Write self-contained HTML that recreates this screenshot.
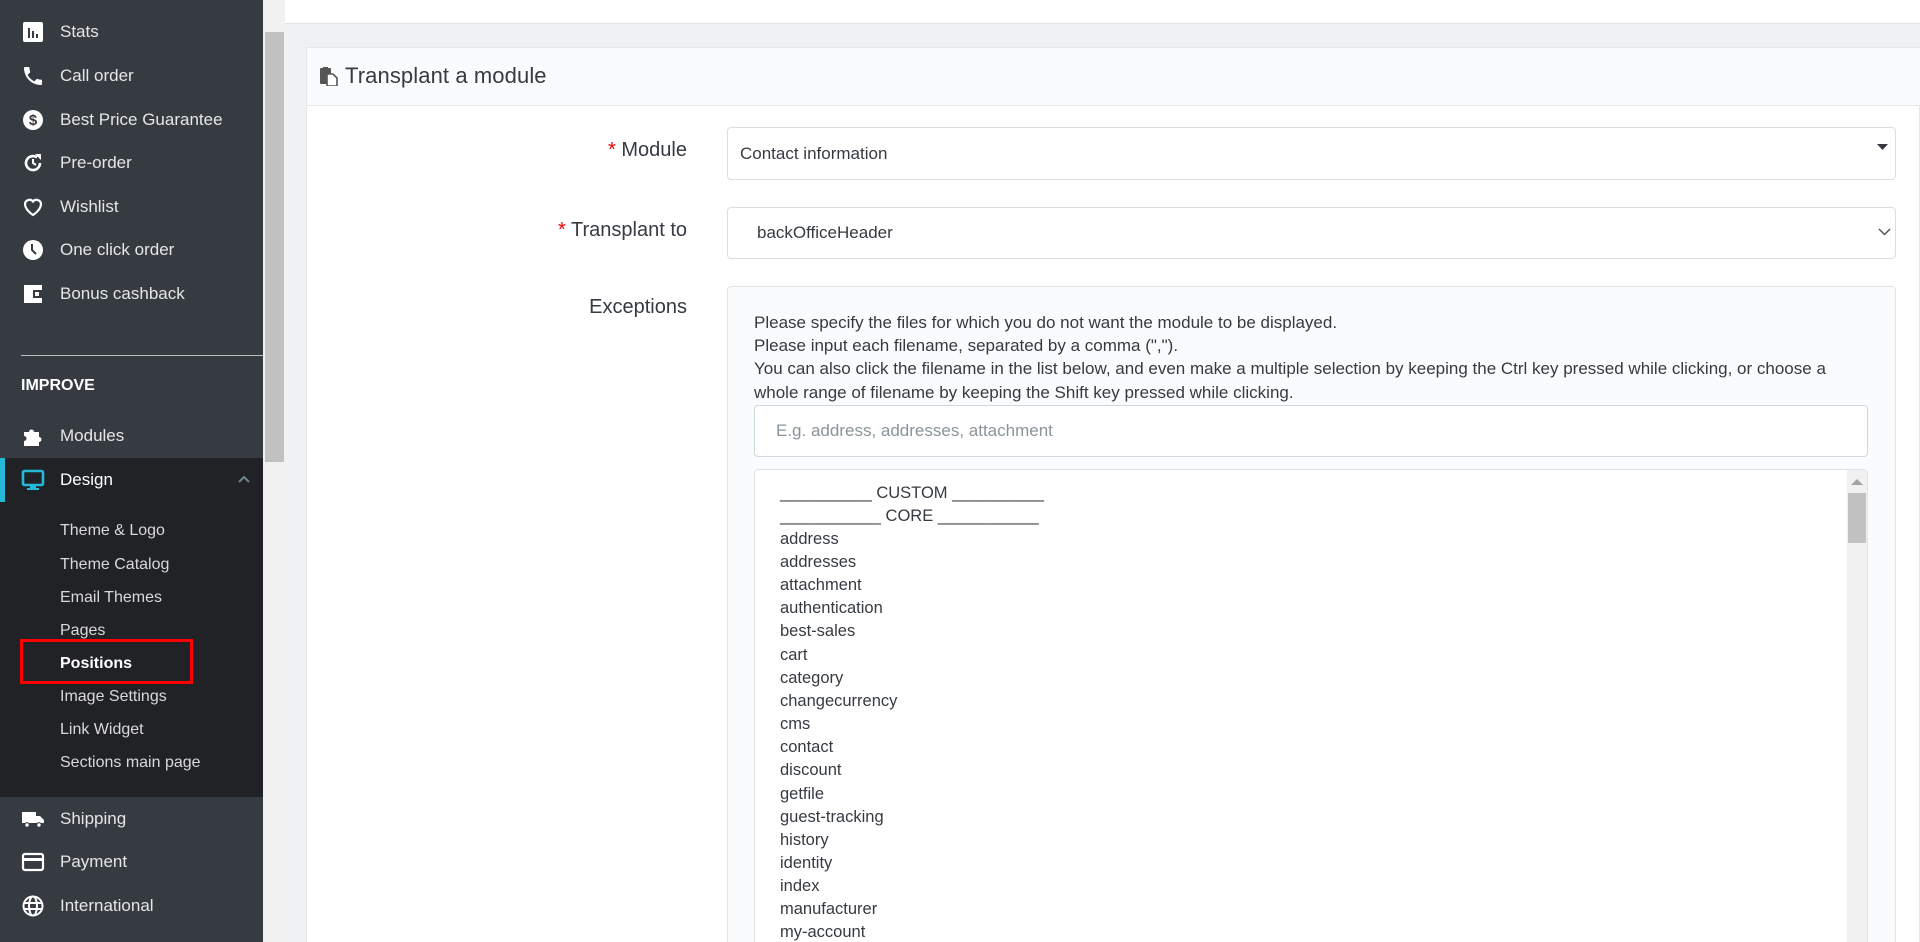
<!DOCTYPE html>
<html style="overflow:hidden"><head><meta charset="utf-8"><style>
*{margin:0;padding:0;box-sizing:border-box}
html,body{width:1920px;height:942px;overflow:hidden}
body{background:#eff1f2;font-family:"Liberation Sans",sans-serif;position:relative}
.a{position:absolute}
#side{left:0;top:0;width:263px;height:942px;background:#363a41}
.it{position:absolute;left:60px;color:#e6e6e6;font-size:17px;line-height:20px;white-space:nowrap}
.ic{position:absolute;left:21px;width:24px;height:24px}
.sub{position:absolute;left:60px;color:#d9d9d9;font-size:16px;line-height:20px}
.lbl{position:absolute;right:1233px;font-size:20px;color:#363a41;line-height:24px;white-space:nowrap}
.lbl b{color:#e00;font-weight:normal}
.li{position:absolute;left:780px;font-size:16.5px;color:#363a41;line-height:20px}
.d{position:absolute;left:754px;font-size:17px;color:#363a41;line-height:20px;white-space:nowrap}
</style></head><body>
<div id="side" class="a"></div>
<div class="a" style="left:0;top:458px;width:263px;height:339px;background:#202226"></div>
<div class="a" style="left:0;top:458px;width:5px;height:44px;background:#25b9d7"></div>
<div class="a" style="left:263px;top:0;width:22px;height:942px;background:#f1f1f1"></div>
<div class="a" style="left:265px;top:32px;width:19px;height:430px;background:#c1c1c1"></div>

<svg class="ic" style="top:20px" viewBox="0 0 24 24"><rect x="2" y="2" width="20" height="20" rx="2" fill="#fff"/><rect x="7" y="8" width="2" height="10" fill="#363a41"/><rect x="11" y="11" width="2" height="7" fill="#363a41"/><rect x="15" y="14" width="2" height="4" fill="#363a41"/></svg>
<div class="it" style="top:22px">Stats</div>
<svg class="ic" style="top:64px" viewBox="0 0 24 24"><path d="M6.6 10.8c1.4 2.8 3.8 5.1 6.6 6.6l2.2-2.2c.3-.3.7-.4 1-.2 1.1.4 2.3.6 3.6.6.6 0 1 .4 1 1V20c0 .6-.4 1-1 1C10.6 21 3 13.4 3 4c0-.6.4-1 1-1h3.5c.6 0 1 .4 1 1 0 1.3.2 2.5.6 3.6.1.3 0 .7-.2 1z" fill="#fff"/></svg>
<div class="it" style="top:66px">Call order</div>
<svg class="ic" style="top:108px" viewBox="0 0 24 24"><circle cx="12" cy="12" r="10" fill="#fff"/><text x="12" y="17" font-size="15" font-weight="bold" text-anchor="middle" fill="#363a41" font-family="Liberation Sans">$</text></svg>
<div class="it" style="top:110px">Best Price Guarantee</div>
<svg class="ic" style="top:151px" viewBox="0 0 24 24"><path d="M19 12a7 7 0 1 1-3-5.7" stroke="#fff" stroke-width="2.6" fill="none"/><path d="M14 3h6v6z" fill="#fff"/><path d="M12 8v4l3 2" stroke="#fff" stroke-width="2" fill="none"/></svg>
<div class="it" style="top:153px">Pre-order</div>
<svg class="ic" style="top:195px" viewBox="0 0 24 24"><path d="M12 20s-8-5-8-11a4.5 4.5 0 0 1 8-2.5A4.5 4.5 0 0 1 20 9c0 6-8 11-8 11z" stroke="#fff" stroke-width="2.2" fill="none"/></svg>
<div class="it" style="top:197px">Wishlist</div>
<svg class="ic" style="top:238px" viewBox="0 0 24 24"><circle cx="12" cy="12" r="10" fill="#fff"/><path d="M11 6v6l4 4" stroke="#363a41" stroke-width="2" fill="none"/></svg>
<div class="it" style="top:240px">One click order</div>
<svg class="ic" style="top:282px" viewBox="0 0 24 24"><path d="M3 3h18v18H3z" fill="#fff"/><rect x="12" y="8" width="9" height="8" fill="#363a41"/><rect x="14" y="10" width="4" height="4" fill="#fff"/></svg>
<div class="it" style="top:284px">Bonus cashback</div>

<div class="a" style="left:21px;top:355px;width:242px;height:1px;background:#bbbdbf"></div>
<div class="a" style="left:21px;top:376px;color:#fff;font-size:16px;font-weight:bold;line-height:20px">IMPROVE</div>
<svg class="ic" style="top:424px" viewBox="0 0 24 24"><path d="M3 8h5a2.5 2.5 0 1 1 5 0h5v5a2.5 2.5 0 1 1 0 5v4H3v-5a2.5 2.5 0 1 0 0-5z" fill="#fff"/></svg>
<div class="it" style="top:426px">Modules</div>
<svg class="ic" style="top:468px" viewBox="0 0 24 24"><rect x="2" y="3" width="20" height="14" rx="1.5" stroke="#25b9d7" stroke-width="2.6" fill="none"/><path d="M9 17h6v3h3v2H6v-2h3z" fill="#25b9d7"/></svg>
<div class="it" style="top:470px;color:#fff">Design</div>
<svg class="a" style="left:237px;top:474px" width="14" height="10" viewBox="0 0 14 10"><path d="M2 8l5-5 5 5" stroke="#6c868e" stroke-width="2" fill="none"/></svg>

<div class="sub" style="top:521px">Theme &amp; Logo</div>
<div class="sub" style="top:555px">Theme Catalog</div>
<div class="sub" style="top:588px">Email Themes</div>
<div class="sub" style="top:621px">Pages</div>
<div class="sub" style="top:654px;color:#fff;font-weight:bold">Positions</div>
<div class="a" style="left:20px;top:639px;width:173px;height:45px;border:3px solid #f00"></div>
<div class="sub" style="top:687px">Image Settings</div>
<div class="sub" style="top:720px">Link Widget</div>
<div class="sub" style="top:753px">Sections main page</div>

<svg class="ic" style="top:807px" viewBox="0 0 24 24"><path d="M1 5h14v11H1z M15 9h4l4 4v3h-8z" fill="#fff"/><circle cx="6" cy="18" r="2.3" fill="#fff" stroke="#363a41" stroke-width="1.2"/><circle cx="18" cy="18" r="2.3" fill="#fff" stroke="#363a41" stroke-width="1.2"/></svg>
<div class="it" style="top:809px">Shipping</div>
<svg class="ic" style="top:850px" viewBox="0 0 24 24"><rect x="2" y="4" width="20" height="16" rx="2" stroke="#fff" stroke-width="2.2" fill="none"/><rect x="2" y="8" width="20" height="3" fill="#fff"/></svg>
<div class="it" style="top:852px">Payment</div>
<svg class="ic" style="top:894px" viewBox="0 0 24 24"><circle cx="12" cy="12" r="9.5" stroke="#fff" stroke-width="2" fill="none"/><ellipse cx="12" cy="12" rx="4" ry="9.5" stroke="#fff" stroke-width="2" fill="none"/><path d="M3 9h18M3 15h18" stroke="#fff" stroke-width="2"/></svg>
<div class="it" style="top:896px">International</div>

<div class="a" style="left:285px;top:0;width:1635px;height:24px;background:#fff;border-bottom:1px solid #dfe3e6"></div>

<div class="a" style="left:306px;top:47px;width:1614px;height:895px;background:#fff;border:1px solid #e4e8ea;border-bottom:none"></div>
<div class="a" style="left:307px;top:48px;width:1613px;height:58px;background:#fafbfc;border-bottom:1px solid #e6eaec"></div>
<svg class="a" style="left:320px;top:67px" width="18" height="19" viewBox="0 0 18 19"><rect x="0" y="1" width="11" height="16" rx="1" fill="#555"/><rect x="3" y="0" width="5" height="3" fill="#555"/><path d="M7 7h6l4 4v8H7z" fill="#fff" stroke="#555" stroke-width="1.6"/></svg>
<div class="a" style="left:345px;top:62px;font-size:22px;color:#363a41;line-height:28px;letter-spacing:.1px">Transplant a module</div>

<div class="lbl" style="top:138px"><b>*</b> Module</div>
<div class="a" style="left:727px;top:127px;width:1169px;height:53px;border:1px solid #d9dfe2;border-radius:4px;background:#fff"></div>
<div class="d" style="left:740px;top:144px">Contact information</div>
<svg class="a" style="left:1877px;top:144px" width="11" height="6"><path d="M0 0h11L5.5 6z" fill="#363a41"/></svg>

<div class="lbl" style="top:218px"><b>*</b> Transplant to</div>
<div class="a" style="left:727px;top:207px;width:1169px;height:52px;border:1px solid #d9dfe2;border-radius:4px;background:#fff"></div>
<div class="d" style="left:757px;top:223px">backOfficeHeader</div>
<svg class="a" style="left:1878px;top:228px" width="13" height="8"><path d="M1 1l5.5 5.5L12 1" stroke="#555" stroke-width="1.5" fill="none"/></svg>

<div class="lbl" style="top:295px">Exceptions</div>
<div class="a" style="left:727px;top:286px;width:1169px;height:656px;border:1px solid #e1e5e8;border-bottom:none;border-radius:4px 4px 0 0;background:#fafbfc"></div>
<div class="d" style="top:313px">Please specify the files for which you do not want the module to be displayed.</div>
<div class="d" style="top:336px">Please input each filename, separated by a comma (",").</div>
<div class="d" style="top:359px">You can also click the filename in the list below, and even make a multiple selection by keeping the Ctrl key pressed while clicking, or choose a</div>
<div class="d" style="top:383px">whole range of filename by keeping the Shift key pressed while clicking.</div>
<div class="a" style="left:754px;top:405px;width:1114px;height:52px;border:1px solid #cfd8dc;border-radius:4px;background:#fff"></div>
<div class="d" style="left:776px;top:421px;color:#8a9499">E.g. address, addresses, attachment</div>
<div class="a" style="left:754px;top:469px;width:1114px;height:473px;border:1px solid #dfe3e6;border-bottom:none;border-radius:4px 4px 0 0;background:#fff"></div>
<div class="a" style="left:1847px;top:470px;width:20px;height:472px;background:#f1f1f1"></div>
<svg class="a" style="left:1851px;top:478px" width="12" height="7"><path d="M0 7L6 1l6 6z" fill="#a3a3a3"/></svg>
<div class="a" style="left:1848px;top:493px;width:18px;height:50px;background:#c1c1c1"></div>

<div class="li" style="top:483px">__________ CUSTOM __________</div>
<div class="li" style="top:506px">___________ CORE ___________</div>
<div class="li" style="top:529px">address</div>
<div class="li" style="top:552px">addresses</div>
<div class="li" style="top:575px">attachment</div>
<div class="li" style="top:598px">authentication</div>
<div class="li" style="top:621px">best-sales</div>
<div class="li" style="top:645px">cart</div>
<div class="li" style="top:668px">category</div>
<div class="li" style="top:691px">changecurrency</div>
<div class="li" style="top:714px">cms</div>
<div class="li" style="top:737px">contact</div>
<div class="li" style="top:760px">discount</div>
<div class="li" style="top:784px">getfile</div>
<div class="li" style="top:807px">guest-tracking</div>
<div class="li" style="top:830px">history</div>
<div class="li" style="top:853px">identity</div>
<div class="li" style="top:876px">index</div>
<div class="li" style="top:899px">manufacturer</div>
<div class="li" style="top:922px">my-account</div>
</body></html>
